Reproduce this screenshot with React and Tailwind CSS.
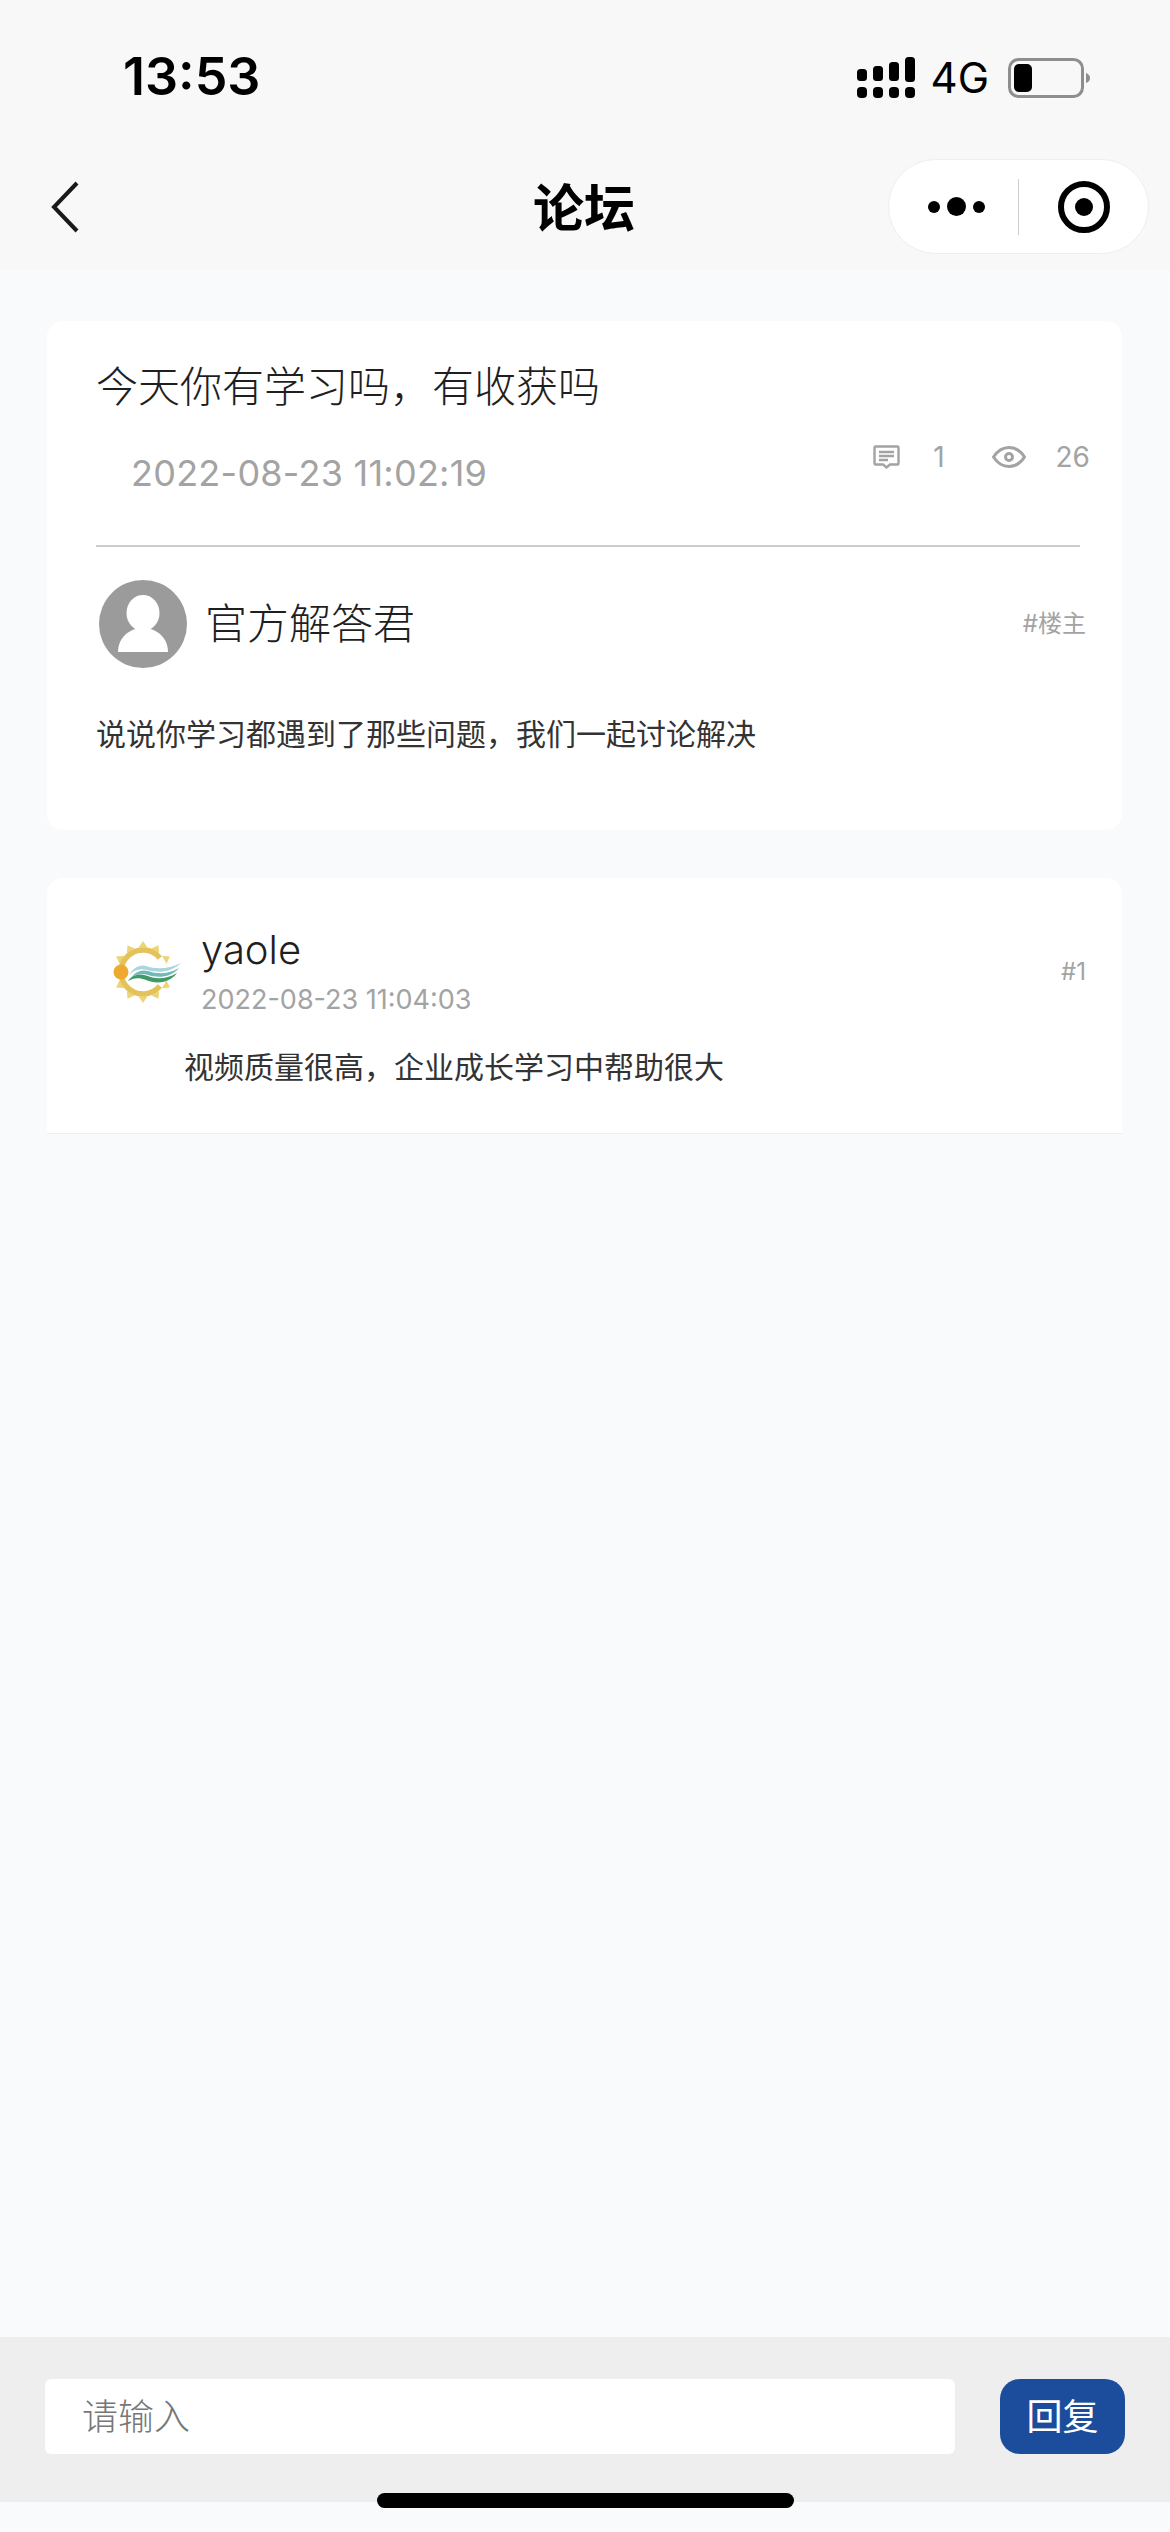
import React from "react";

const FONT = "font-['Inter','Noto_Sans_CJK_SC',sans-serif]";

function SignalIcon() {
    const bars = [
        { x: 0, y: 12, h: 12 },
        { x: 16, y: 9, h: 15 },
        { x: 32, y: 5, h: 19 },
        { x: 48, y: 0, h: 25 },
    ];
    return (
        <svg width="58" height="41" viewBox="0 0 58 41" fill="#000">
            {bars.map((b) => (
                <g key={b.x}>
                    <rect x={b.x} y={b.y} width="10" height={b.h} rx="3.5" />
                    <rect x={b.x} y="30" width="10" height="11" rx="4" />
                </g>
            ))}
        </svg>
    );
}

function BatteryIcon() {
    return (
        <svg width="84" height="40" viewBox="0 0 84 40">
            <rect x="1.5" y="1.5" width="73" height="37" rx="9" fill="none" stroke="#8e8e8e" strokeWidth="3" />
            <rect x="6" y="6" width="18" height="28" rx="5" fill="#000" />
            <path d="M78 15 C81 16 82 18 82 20 C82 22 81 24 78 25 Z" fill="#8e8e8e" />
        </svg>
    );
}

function BackIcon() {
    return (
        <svg width="28" height="52" viewBox="0 0 28 52" fill="none" stroke="#1a1a1a" strokeWidth="4">
            <path d="M26 2 L3 26 L26 50" />
        </svg>
    );
}

function DefaultAvatar() {
    return (
        <svg width="88" height="88" viewBox="0 0 88 88" className="shrink-0">
            <circle cx="44" cy="44" r="44" fill="#9b9b9b" />
            <ellipse cx="44" cy="33" rx="16.5" ry="18" fill="#fff" />
            <path d="M19 72 C19 58 30 48 44 48 C58 48 69 58 69 72 Z" fill="#fff" />
        </svg>
    );
}

function SunLogo() {
    const rays = [0, 30, 60, 120, 150, 180, 210, 240, 300, 330];
    return (
        <svg width="68" height="64" viewBox="0 0 68 64" className="shrink-0">
            {rays.map((r) => (
                <path key={r} d="M30 1 L34.5 7.5 L25.5 7.5 Z" fill="#ecd477" transform={`rotate(${r} 30 32)`} />
            ))}
            <path d="M46.9 17.9 A22 22 0 1 0 46.9 46.1" fill="none" stroke="#e3c25a" strokeWidth="5.5" />
            <path d="M16 35 C20 28 27 24 33 26 C42 29 54 30 68 23 C58 33 44 33 34 30 C27 28 21 30 16 35 Z" fill="#a9d5de" />
            <path d="M18 38 C22 32 28 29 35 31 C44 34 54 35 66 28 C58 38 44 38 35 35 C28 33 23 34 18 38 Z" fill="#72b8b8" />
            <path d="M15 41 C19 35 26 33 33 35.5 C42 39 52 40 64 33 C56 44 42 44 33 40 C26 37 20 38 15 41 Z" fill="#3f9a68" />
            <circle cx="8" cy="32" r="7.5" fill="#eeaa2e" />
        </svg>
    );
}

function CommentIcon() {
    return (
        <svg width="27" height="24" viewBox="0 0 27 24" fill="none" stroke="#a3a3a3" strokeWidth="2.4">
            <path d="M2.5 1.5 H24.5 A1 1 0 0 1 25.5 2.5 V18.5 A1 1 0 0 1 24.5 19.5 H17 L13.5 22.5 L10 19.5 H2.5 A1 1 0 0 1 1.5 18.5 V2.5 A1 1 0 0 1 2.5 1.5 Z" />
            <path d="M6 7 H21 M6 11 H21 M6 15 H15" />
        </svg>
    );
}

function EyeIcon() {
    return (
        <svg width="34" height="22" viewBox="0 0 34 22" fill="none" stroke="#a3a3a3" strokeWidth="3">
            <path d="M1.5 11 C6 4 11 1.5 17 1.5 C23 1.5 28 4 32.5 11 C28 18 23 20.5 17 20.5 C11 20.5 6 18 1.5 11 Z" />
            <circle cx="17" cy="11" r="3.5" />
        </svg>
    );
}

export default function App() {
    return (
        <div className={`relative w-[1170px] h-[2532px] flex flex-col bg-[#f9fafc] overflow-hidden ${FONT}`}>
            {/* Status bar + nav */}
            <header className="h-[270px] shrink-0 bg-[#f8f8f8]">
                <div className="h-[159px] flex items-start justify-between pl-[123px] pr-[78px] pt-[48px]">
                    <span className="text-[52px] leading-[58px] font-semibold text-black">13:53</span>
                    <div className="flex items-center pt-[9px]">
                        <SignalIcon />
                        <span className="ml-[16px] mr-[19px] text-[42px] leading-[41px] text-black">4G</span>
                        <BatteryIcon />
                    </div>
                </div>
                <div className="relative flex items-center justify-between pl-[51px] pr-[21px]">
                    <BackIcon />
                    <h1 className="absolute left-[533px] top-[20px] text-[51px] leading-[60px] font-bold text-black">论坛</h1>
                    <div className="w-[261px] h-[95px] rounded-full bg-white border border-[#eeeeee] flex items-center">
                        <div className="w-[129px] flex items-center justify-center gap-[7px] pl-[6px]">
                            <span className="w-[12px] h-[12px] rounded-full bg-black" />
                            <span className="w-[19px] h-[19px] rounded-full bg-black" />
                            <span className="w-[12px] h-[12px] rounded-full bg-black" />
                        </div>
                        <div className="w-px h-[56px] bg-[#cccccc]" />
                        <div className="flex-1 flex items-center justify-center">
                            <div className="w-[52px] h-[52px] rounded-full border-[6px] border-black flex items-center justify-center">
                                <span className="w-[18px] h-[18px] rounded-full bg-black" />
                            </div>
                        </div>
                    </div>
                </div>
            </header>

            <main className="flex-1 px-[47px] pt-[51px] flex flex-col gap-[48px]">
                {/* Post */}
                <section className="w-[1075px] h-[509px] rounded-[16px] bg-white pl-[49px] pr-[36px] pt-[38px]">
                    <h2 className="text-[42px] leading-[56px] font-light text-[#1f1f1f]">今天你有学习吗，有收获吗</h2>
                    <div className="flex items-start justify-between h-[130px]">
                        <span className="ml-[35px] mt-[33px] text-[36px] leading-[50px] tracking-[0.25px] text-[#a3a3a3]">2022-08-23 11:02:19</span>
                        <div className="flex items-center -mr-[4px] mt-[24px] text-[28px] leading-[36px] text-[#a3a3a3]">
                            <CommentIcon />
                            <span className="ml-[33px]">1</span>
                            <span className="ml-[47px]"><EyeIcon /></span>
                            <span className="ml-[30px]">26</span>
                        </div>
                    </div>
                    <div className="w-[984px] h-[2px] bg-[#cccccc]" />
                    <div className="flex items-center mt-[33px] pl-[3px]">
                        <DefaultAvatar />
                        <span className="ml-[18px] text-[42px] leading-[56px] font-light text-[#1f1f1f]">官方解答君</span>
                        <span className="ml-auto text-[24px] leading-[32px] text-[#a3a3a3]">#楼主</span>
                    </div>
                    <p className="mt-[45px] text-[30px] leading-[42px] text-[#333333]">说说你学习都遇到了那些问题，我们一起讨论解决</p>
                </section>

                {/* Reply */}
                <section className="w-[1075px] h-[256px] rounded-t-[16px] bg-white border-b border-[#eeeeee] pt-[47px] pl-[66px] pr-[36px]">
                    <div className="flex items-start">
                        <div className="mt-[15px]"><SunLogo /></div>
                        <div className="ml-[20px] flex-1">
                            <div className="text-[40px] leading-[50px] font-light text-[#1f1f1f]">yaole</div>
                            <div className="mt-[7px] text-[27px] leading-[36px] text-[#a3a3a3]">2022-08-23 11:04:03</div>
                        </div>
                        <span className="mt-[31px] text-[24px] leading-[32px] text-[#a3a3a3]">#1</span>
                    </div>
                    <p className="mt-[28px] ml-[71px] text-[30px] leading-[42px] text-[#333333]">视频质量很高，企业成长学习中帮助很大</p>
                </section>
            </main>

            {/* Reply bar */}
            <footer className="h-[165px] shrink-0 bg-[#eeeeee] mb-[30px] pt-[42px] pl-[45px] pr-[45px] flex items-start justify-between">
                <div className="w-[910px] h-[75px] rounded-[6px] bg-white pl-[37px] flex items-center text-[36px] font-light text-[#777777]">请输入</div>
                <button className="w-[125px] h-[75px] rounded-[20px] bg-[#1c4c9c] text-[36px] text-white">回复</button>
            </footer>

            {/* Home indicator */}
            <div className="absolute left-[377px] top-[2493px] w-[417px] h-[15px] rounded-full bg-black" />
        </div>
    );
}
